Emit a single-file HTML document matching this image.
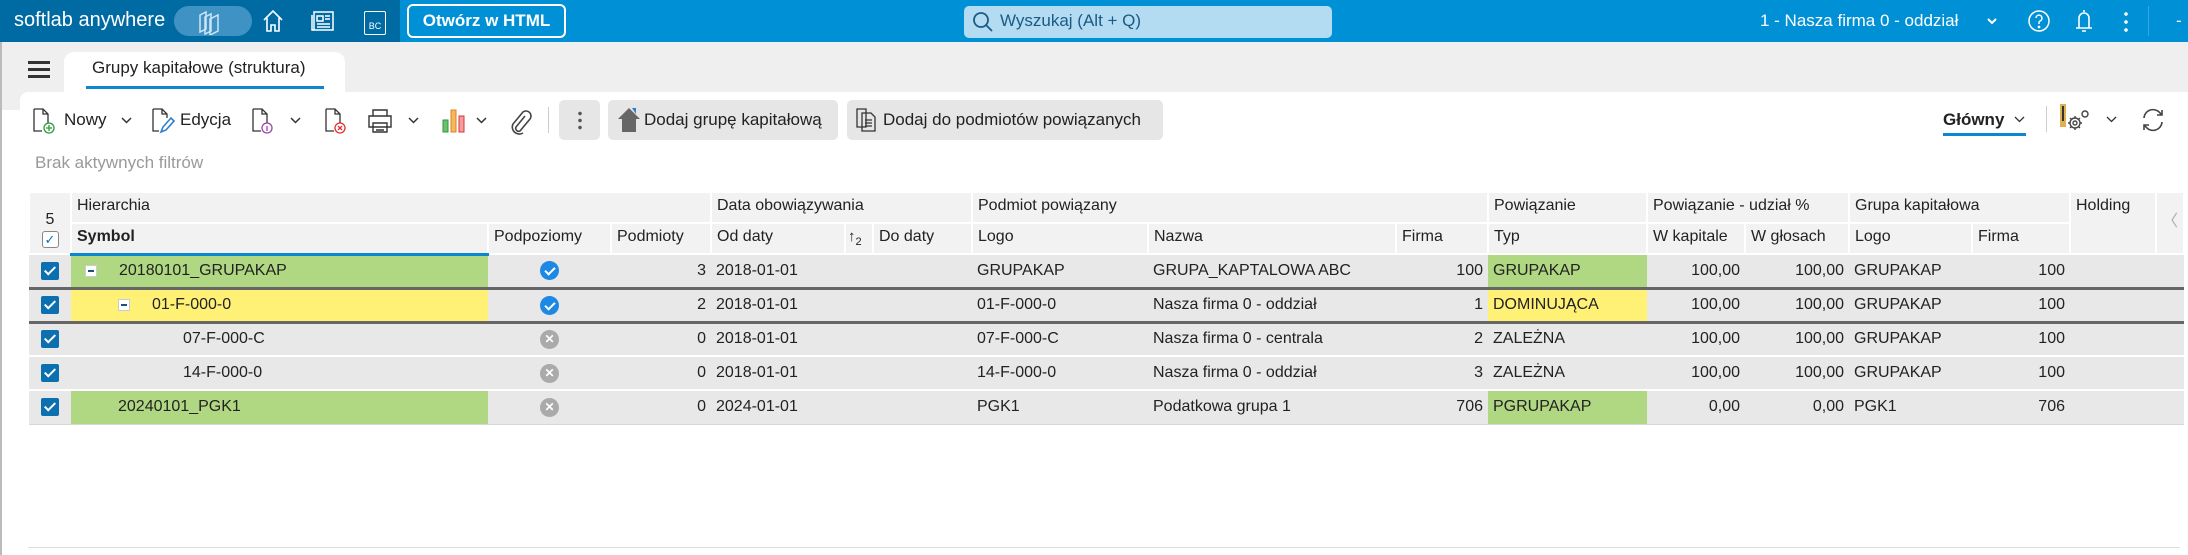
<!DOCTYPE html>
<html><head><meta charset="utf-8"><style>
*{box-sizing:border-box;margin:0;padding:0}
body{width:2188px;height:555px;overflow:hidden;background:#efefef;font-family:"Liberation Sans",sans-serif;color:#222;position:relative}
.top{position:absolute;left:0;top:0;width:2188px;height:42px;background:#0090d6}
.topdark{position:absolute;left:0;top:0;width:400px;height:42px;background:#006aa3}
.ab{position:absolute}
.wt{color:#fff}
.panel{position:absolute;left:20px;top:92px;width:2168px;height:463px;background:#fff;border-radius:8px 0 0 0}
.btn{background:#e6e6e6;border-radius:5px;height:40px;display:flex;align-items:center;padding:0 8px;font-size:17px;position:absolute;top:100px}
table{position:absolute;left:28px;top:191px;border-collapse:collapse;table-layout:fixed;font-size:16px}
th{background:#f2f2f2;font-weight:normal;text-align:left;padding:4px 5px 0;border:2px solid #fff;vertical-align:top;height:31px}
th.b{font-weight:bold}
td{background:#e8e8e8;height:34px;border-top:2px solid #fff;border-bottom:1px solid #d6d6d6;padding:0 5px;white-space:nowrap;overflow:hidden}
td.r{text-align:right}
.g{background:#b0d882!important}
.y{background:#fff176!important}
tr.sel td{border-top:3px solid #666;border-bottom:3px solid #666}
.cb{display:inline-block;width:18px;height:18px;background:#0b6fb0;border-radius:2px;vertical-align:middle;position:relative}
.cb:after{content:"";position:absolute;left:6px;top:2px;width:4px;height:9px;border:solid #fff;border-width:0 2px 2px 0;transform:rotate(45deg)}
.ci{display:inline-block;width:19px;height:19px;border-radius:50%;background:#1e88e5;position:relative;vertical-align:middle}
.ci:after{content:"";position:absolute;left:7px;top:4px;width:4px;height:8px;border:solid #fff;border-width:0 2px 2px 0;transform:rotate(45deg)}
.cx{display:inline-block;width:19px;height:19px;border-radius:50%;background:#aaa;color:#fff;font-size:12px;font-weight:bold;text-align:center;line-height:19px;vertical-align:middle}
.mn{display:inline-block;width:12px;height:12px;border:1px solid #ccc;background:#fff;vertical-align:middle;position:relative;margin-right:22px}
.mn:after{content:"";position:absolute;left:2px;top:4px;width:6px;height:2px;background:#1a4f8a}
</style></head><body>
<div class="top"></div><div class="topdark"></div>
<div class="ab wt" style="left:14px;top:9px;font-size:20px">softlab anywhere</div>
<div class="ab" style="left:174px;top:6px;width:78px;height:30px;border-radius:15px;background:#3f93c4"></div>
<svg class="ab" style="left:196px;top:9px" width="28" height="26" viewBox="0 0 28 26" fill="none" stroke="#cfe6f4" stroke-width="1.5"><path d="M4 6l6-3v17l-6 3z"/><path d="M9 8l6-3v17l-6 3z"/><path d="M14 10l8-4v16l-8 4z"/></svg>
<svg class="ab" style="left:262px;top:9px" width="22" height="24" viewBox="0 0 22 24" fill="none" stroke="#fff" stroke-width="1.6"><path d="M2 11L11 2l9 9M5 9v13h4v-6h4v6h4V9"/></svg>
<svg class="ab" style="left:311px;top:10px" width="24" height="22" viewBox="0 0 24 22" fill="none" stroke="#fff" stroke-width="1.5"><rect x="3" y="2" width="19" height="18"/><path d="M1 5v15h2M6 6h6v5H6zM14 6h5M14 9h5M6 14h13M6 17h13"/></svg>
<div class="ab" style="left:364px;top:11px;width:22px;height:24px;border:1.5px solid #fff;border-radius:2px;color:#fff;font-size:9px;text-align:center;padding-top:9px">BC</div>
<div class="ab wt" style="left:407px;top:4px;width:159px;height:34px;border:2px solid #fff;border-radius:6px;font-size:17px;font-weight:bold;text-align:center;line-height:30px">Otwórz w HTML</div>
<div class="ab" style="left:964px;top:6px;width:368px;height:32px;background:#b3dcf2;border-radius:5px"></div>
<svg class="ab" style="left:972px;top:11px" width="22" height="22" viewBox="0 0 22 22" fill="none" stroke="#1a5a85" stroke-width="1.8"><circle cx="9" cy="9" r="7"/><path d="M14 14l6 6"/></svg>
<div class="ab" style="left:1000px;top:11px;font-size:17px;color:#1a5a85">Wyszukaj (Alt + Q)</div>
<div class="ab wt" style="left:1760px;top:11px;font-size:17px">1 - Nasza firma 0 - oddział</div>
<svg class="ab" style="left:1986px;top:17px" width="12" height="9" viewBox="0 0 12 9" fill="none" stroke="#fff" stroke-width="2"><path d="M2 2l4 4 4-4"/></svg>
<svg class="ab" style="left:2027px;top:9px" width="24" height="24" viewBox="0 0 24 24" fill="none" stroke="#fff" stroke-width="1.5"><circle cx="12" cy="12" r="10"/><path d="M9 9a3 3 0 1 1 4 3c-1 .5-1 1-1 3"/><circle cx="12" cy="18" r=".6" fill="#fff"/></svg>
<svg class="ab" style="left:2073px;top:8px" width="22" height="26" viewBox="0 0 22 26" fill="none" stroke="#fff" stroke-width="1.6"><path d="M11 2v2M6 20V10a5 5 0 0 1 10 0v10M3 20h16M9 23h4"/></svg>
<div class="ab" style="left:2124px;top:10px;width:4px;height:22px;background:radial-gradient(circle,#fff 1.6px,transparent 2px) 0 0/4px 8px"></div>
<div class="ab" style="left:2148px;top:6px;width:1px;height:30px;background:#3aa6e0"></div>
<div class="ab wt" style="left:2176px;top:11px;font-size:17px">-</div>

<div class="ab" style="left:28px;top:61px;width:22px;height:3px;background:#333;box-shadow:0 7px 0 #333,0 14px 0 #333"></div>
<div class="ab" style="left:64px;top:52px;width:281px;height:42px;background:#fff;border-radius:10px 10px 0 0"></div>
<div class="ab" style="left:92px;top:58px;font-size:17px">Grupy kapitałowe (struktura)</div>
<div class="ab" style="left:86px;top:86px;width:238px;height:3px;background:#0b86d0"></div>
<div class="ab" style="left:0;top:110px;width:20px;height:445px;background:#fff"></div>
<div class="panel"></div>

<svg class="ab" style="left:32px;top:108px" width="24" height="26" viewBox="0 0 24 26" fill="none" stroke="#333" stroke-width="1.3"><path d="M2 1h9l5 5v9M2 1v22h8M11 1v5h5"/><circle cx="17" cy="20" r="5" stroke="#2a9a3a"/><path d="M17 17v6M14 20h6" stroke="#2a9a3a"/></svg>
<div class="ab" style="left:64px;top:110px;font-size:17px">Nowy</div>
<svg class="ab" style="left:121px;top:117px" width="11" height="8" viewBox="0 0 11 8" fill="none" stroke="#333" stroke-width="1.5"><path d="M1 1l4.5 4.5L10 1"/></svg>
<svg class="ab" style="left:151px;top:108px" width="24" height="26" viewBox="0 0 24 26" fill="none" stroke="#333" stroke-width="1.3"><path d="M2 1h9l5 5v4M2 1v22h6M11 1v5h5"/><path d="M10 24l2-5 8-9 3 3-8 9z" stroke="#2a7fd0" stroke-width="1.6"/></svg>
<div class="ab" style="left:180px;top:110px;font-size:17px">Edycja</div>
<svg class="ab" style="left:251px;top:108px" width="24" height="26" viewBox="0 0 24 26" fill="none" stroke="#333" stroke-width="1.3"><path d="M2 1h9l5 5v9M2 1v22h8M11 1v5h5"/><circle cx="16" cy="20" r="5" stroke="#a040b0"/><path d="M16 18v5" stroke="#a040b0"/></svg>
<svg class="ab" style="left:290px;top:117px" width="11" height="8" viewBox="0 0 11 8" fill="none" stroke="#333" stroke-width="1.5"><path d="M1 1l4.5 4.5L10 1"/></svg>
<svg class="ab" style="left:324px;top:108px" width="24" height="26" viewBox="0 0 24 26" fill="none" stroke="#333" stroke-width="1.3"><path d="M2 1h9l5 5v9M2 1v22h8M11 1v5h5"/><circle cx="16" cy="20" r="5" stroke="#e03030"/><path d="M14 18l4 4M18 18l-4 4" stroke="#e03030"/></svg>
<svg class="ab" style="left:366px;top:108px" width="28" height="26" viewBox="0 0 28 26" fill="none" stroke="#333" stroke-width="1.4"><path d="M7 8V2h14v6M3 8h22v11H3zM7 15h14v9H7zM10 19h8M10 22h8"/></svg>
<svg class="ab" style="left:408px;top:117px" width="11" height="8" viewBox="0 0 11 8" fill="none" stroke="#333" stroke-width="1.5"><path d="M1 1l4.5 4.5L10 1"/></svg>
<svg class="ab" style="left:441px;top:108px" width="26" height="26" viewBox="0 0 26 26"><rect x="2" y="12" width="5" height="12" fill="#6cc070" stroke="#2a9a3a"/><rect x="10" y="2" width="5" height="22" fill="#f5b860" stroke="#e08020"/><rect x="18" y="8" width="5" height="16" fill="#f0a0a0" stroke="#e03030"/></svg>
<svg class="ab" style="left:476px;top:117px" width="11" height="8" viewBox="0 0 11 8" fill="none" stroke="#333" stroke-width="1.5"><path d="M1 1l4.5 4.5L10 1"/></svg>
<svg class="ab" style="left:508px;top:107px" width="24" height="28" viewBox="0 0 24 28" fill="none" stroke="#444" stroke-width="1.6"><path d="M17 9L8 20a3 3 0 0 0 4 4l10-12a5 5 0 0 0-7-7L5 17a7 7 0 0 0 10 9"/></svg>
<div class="ab" style="left:548px;top:107px;width:1px;height:26px;background:#ccc"></div>
<div class="btn" style="left:559px;width:41px;justify-content:center"><div style="width:4px;height:20px;background:radial-gradient(circle,#555 1.6px,transparent 2px) 0 0/4px 7px"></div></div>
<div class="btn" style="left:608px;width:230px"><svg width="26" height="28" viewBox="0 0 26 28"><path d="M13 2L2 13h4v13h14V13h4z" fill="#666"/><path d="M16 2h4v6" fill="#2a7fd0"/></svg><span style="margin-left:2px">Dodaj grupę kapitałową</span></div>
<div class="btn" style="left:847px;width:316px"><svg width="24" height="26" viewBox="0 0 24 26" fill="none" stroke="#333" stroke-width="1.3"><path d="M2 2h9v18H2zM7 6h9l4 4v14H7z"/><path d="M10 13h7M10 16h7M10 19h7"/></svg><span style="margin-left:4px">Dodaj do podmiotów powiązanych</span></div>

<div class="ab" style="left:1943px;top:110px;font-size:17px;font-weight:bold">Główny</div>
<svg class="ab" style="left:2014px;top:116px" width="11" height="8" viewBox="0 0 11 8" fill="none" stroke="#333" stroke-width="1.3"><path d="M1 1l4.5 4.5L10 1"/></svg>
<div class="ab" style="left:1943px;top:133px;width:83px;height:3px;background:#0b86d0"></div>
<div class="ab" style="left:2046px;top:106px;width:1px;height:26px;background:#ccc"></div>
<div class="ab" style="left:2060px;top:104px;width:6px;height:23px;background:#e0b050"></div>
<div class="ab" style="left:2062px;top:106px;width:2px;height:15px;background:#333"></div>
<svg class="ab" style="left:2066px;top:108px" width="26" height="26" viewBox="0 0 26 26" fill="none" stroke="#444" stroke-width="1.4"><circle cx="9" cy="15" r="5"/><circle cx="9" cy="15" r="2"/><path d="M9 8v2M9 20v2M2 15h2M14 15h2M4 10l1.5 1.5M12.5 18.5L14 20M4 20l1.5-1.5M12.5 11.5L14 10"/><circle cx="19" cy="6" r="3"/></svg>
<svg class="ab" style="left:2106px;top:116px" width="11" height="8" viewBox="0 0 11 8" fill="none" stroke="#333" stroke-width="1.3"><path d="M1 1l4.5 4.5L10 1"/></svg>
<svg class="ab" style="left:2140px;top:106px" width="26" height="28" viewBox="0 0 26 28" fill="none" stroke="#444" stroke-width="1.6"><path d="M4 12a9 9 0 0 1 16-5l2 2M22 4v5h-5M22 16a9 9 0 0 1-16 5l-2-2M4 24v-5h5"/></svg>

<div class="ab" style="left:35px;top:153px;font-size:17px;color:#999">Brak aktywnych filtrów</div>

<table>
<colgroup><col style="width:42px"><col style="width:417px"><col style="width:123px"><col style="width:100px"><col style="width:134px"><col style="width:28px"><col style="width:99px"><col style="width:176px"><col style="width:248px"><col style="width:92px"><col style="width:159px"><col style="width:98px"><col style="width:104px"><col style="width:123px"><col style="width:98px"><col style="width:86px"><col style="width:25px"></colgroup>
<tr><th rowspan="2" style="text-align:center;padding-top:18px">5<br><span style="display:inline-block;width:17px;height:17px;border:1px solid #888;border-radius:3px;background:#fff;margin-top:2px;font-size:13px;line-height:15px;color:#0b6fb0">✓</span></th>
<th colspan="3">Hierarchia</th><th colspan="3">Data obowiązywania</th><th colspan="3">Podmiot powiązany</th><th>Powiązanie</th><th colspan="2">Powiązanie - udział %</th><th colspan="2">Grupa kapitałowa</th><th rowspan="2">Holding</th><th rowspan="2" style="color:#aaa;text-align:center;padding-top:14px">〈</th></tr>
<tr><th class="b" style="border-bottom:3px solid #0b86d0">Symbol</th><th>Podpoziomy</th><th>Podmioty</th><th>Od daty</th><th style="padding:4px 0 0 2px;font-size:15px">↑<sub style="font-size:11px">2</sub></th><th>Do daty</th><th>Logo</th><th>Nazwa</th><th>Firma</th><th>Typ</th><th>W kapitale</th><th>W głosach</th><th>Logo</th><th>Firma</th></tr>
<tr><td style="text-align:center"><span class="cb"></span></td><td class="g" style="padding-left:14px"><span class="mn"></span>20180101_GRUPAKAP</td><td style="text-align:center"><span class="ci"></span></td><td class="r">3</td><td>2018-01-01</td><td></td><td></td><td>GRUPAKAP</td><td>GRUPA_KAPTALOWA ABC</td><td class="r">100</td><td class="g">GRUPAKAP</td><td class="r">100,00</td><td class="r">100,00</td><td>GRUPAKAP</td><td class="r">100</td><td></td><td></td></tr>
<tr class="sel"><td style="text-align:center"><span class="cb"></span></td><td class="y" style="padding-left:47px"><span class="mn"></span>01-F-000-0</td><td style="text-align:center"><span class="ci"></span></td><td class="r">2</td><td>2018-01-01</td><td></td><td></td><td>01-F-000-0</td><td>Nasza firma 0 - oddział</td><td class="r">1</td><td class="y">DOMINUJĄCA</td><td class="r">100,00</td><td class="r">100,00</td><td>GRUPAKAP</td><td class="r">100</td><td></td><td></td></tr>
<tr><td style="text-align:center"><span class="cb"></span></td><td style="padding-left:112px">07-F-000-C</td><td style="text-align:center"><span class="cx">✕</span></td><td class="r">0</td><td>2018-01-01</td><td></td><td></td><td>07-F-000-C</td><td>Nasza firma 0 - centrala</td><td class="r">2</td><td>ZALEŻNA</td><td class="r">100,00</td><td class="r">100,00</td><td>GRUPAKAP</td><td class="r">100</td><td></td><td></td></tr>
<tr><td style="text-align:center"><span class="cb"></span></td><td style="padding-left:112px">14-F-000-0</td><td style="text-align:center"><span class="cx">✕</span></td><td class="r">0</td><td>2018-01-01</td><td></td><td></td><td>14-F-000-0</td><td>Nasza firma 0 - oddział</td><td class="r">3</td><td>ZALEŻNA</td><td class="r">100,00</td><td class="r">100,00</td><td>GRUPAKAP</td><td class="r">100</td><td></td><td></td></tr>
<tr><td style="text-align:center"><span class="cb"></span></td><td class="g" style="padding-left:47px">20240101_PGK1</td><td style="text-align:center"><span class="cx">✕</span></td><td class="r">0</td><td>2024-01-01</td><td></td><td></td><td>PGK1</td><td>Podatkowa grupa 1</td><td class="r">706</td><td class="g">PGRUPAKAP</td><td class="r">0,00</td><td class="r">0,00</td><td>PGK1</td><td class="r">706</td><td></td><td></td></tr>
</table>
<div class="ab" style="left:28px;top:547px;width:2152px;height:1px;background:#ddd"></div>
<div class="ab" style="left:0;top:42px;width:2px;height:513px;background:#bbb"></div>
</body></html>
